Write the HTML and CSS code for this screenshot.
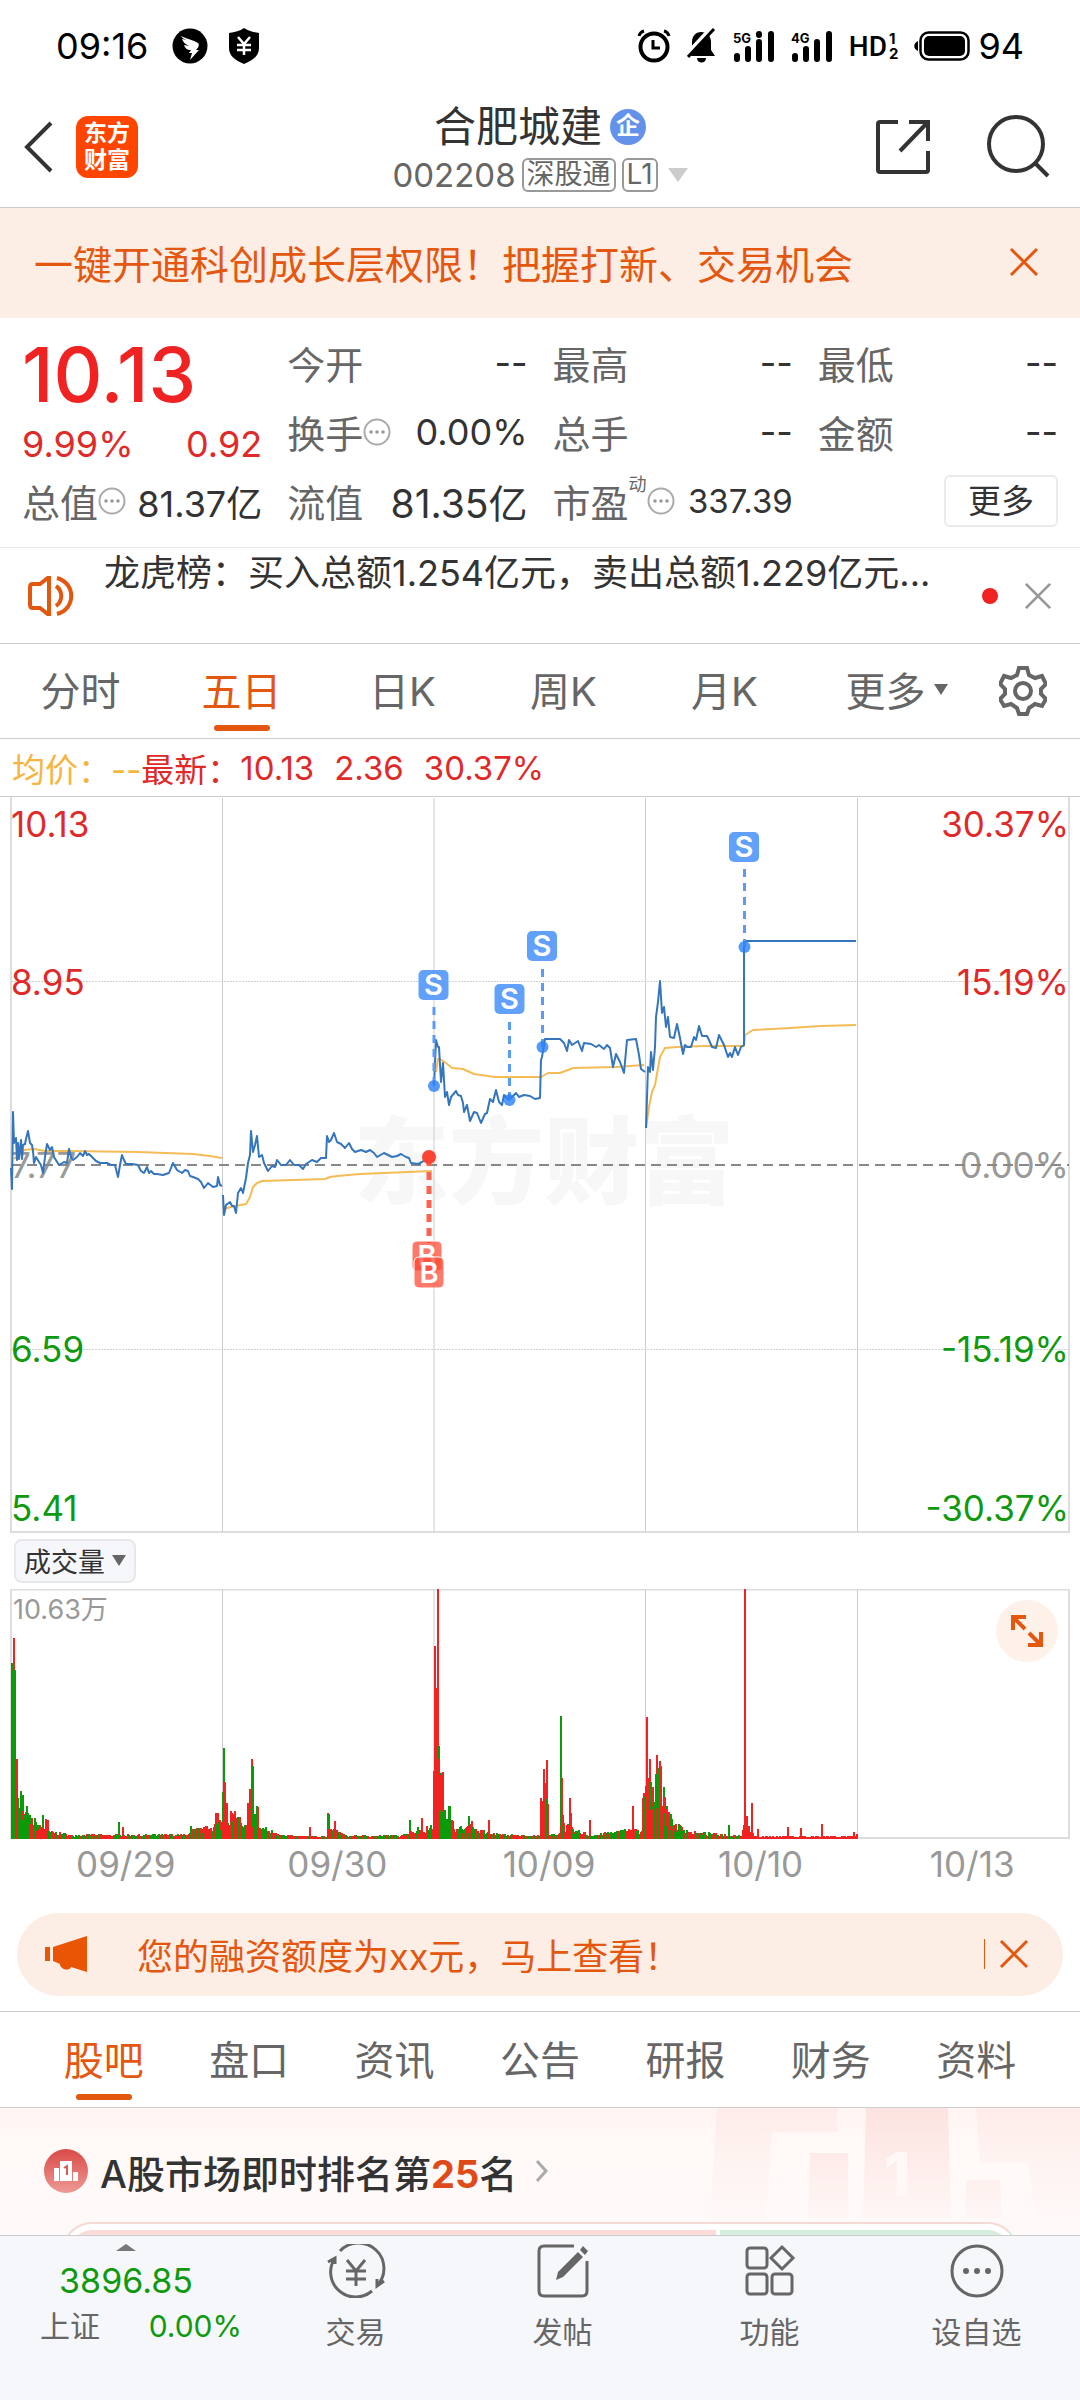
FILE: index.html
```
<!doctype html>
<html lang="zh-CN">
<head>
    <meta charset="utf-8">
    <meta name="viewport" content="width=device-width, initial-scale=1">
    <title>合肥城建 002208</title>
    <link rel="stylesheet" href="styles.css">
</head>
<body>
    <svg class="defs" aria-hidden="true">
        <symbol id="close" viewBox="0 0 30 30"><path d="M2 2L28 28M28 2L2 28"/></symbol>
        <symbol id="info" viewBox="0 0 28 28">
            <circle cx="14" cy="14" r="12.5" fill="none" stroke="#aaa" stroke-width="2"/>
            <g fill="#999"><circle cx="8" cy="14" r="1.8"/><circle cx="14" cy="14" r="1.8"/><circle cx="20" cy="14" r="1.8"/></g>
        </symbol>
    </svg>

    <div class="statusbar">
        <span class="clock">09:16</span>
        <svg width="36" height="36" viewBox="0 0 36 36"><circle cx="18" cy="18" r="17.5"/><path fill="#fff" d="M9 8c6 3 12 4 17 7 2 2 0 5-2 7h3l-9 10 2-7h-3l2-3c-4 0-6-2-7-5l5 1c-4-2-6-4-7-7l5 1c-3-1-5-2-6-4z"/></svg>
        <svg width="32" height="36" viewBox="0 0 32 36"><path d="M16 0c4 3 9 4 15 5v15c0 8-6 12-15 16C7 32 1 28 1 20V5c6-1 11-2 15-5z"/><path d="M10 9l6 7 6-7M9 17h14M9 22h14M16 16v11" fill="none" stroke="#fff" stroke-width="2.5"/></svg>
        <div class="statusbar-right">
            <svg width="34" height="34" viewBox="0 0 34 34" fill="none" stroke="#000" stroke-width="4"><circle cx="17" cy="18" r="13.5"/><path d="M16 11v8h7" stroke-width="3"/><path d="M2 7q1-4 5-5M32 7q-1-4-5-5" stroke-width="3"/></svg>
            <svg width="30" height="36" viewBox="0 0 30 36"><path d="M14 4c6 0 10 4 10 10v8l4 6H1l4-6v-8c0-6 4-10 9-10zM10 30h9c0 6-9 6-9 0z"/><path d="M-1 27L24 0" stroke="#fff" stroke-width="4"/><path d="M1 29L27 1" stroke="#000" stroke-width="3"/></svg>
            <svg class="signal" width="42" height="36" viewBox="0 -5 42 36"><text x="0" y="10">5G</text><path d="M4 23v3M15 16v10M26 9v17M26 1v1M38 1v25"/></svg>
            <svg class="signal" width="42" height="36" viewBox="0 -5 42 36"><text x="0" y="10">4G</text><path d="M4 23v3M15 16v10M26 9v17M38 1v25"/></svg>
            <span class="hd">HD</span>
            <span class="hd-sims"><i>1</i><i>2</i></span>
            <svg width="56" height="30" viewBox="0 0 56 30"><rect x="6.5" y="1.5" width="48" height="27" rx="8" fill="none" stroke="#000" stroke-width="2.5"/><rect x="10" y="5" width="41" height="20" rx="5"/><path d="M4 10v10c-5-2-5-8 0-10z"/></svg>
            <span class="battery">94</span>
        </div>
    </div>

    <header class="header">
        <button aria-label="返回"><svg width="30" height="52" viewBox="0 0 30 52"><path d="M27 2L3 26l24 24"/></svg></button>
        <div class="logo"><span>东方</span><span>财富</span></div>
        <div class="title">
            <h1>合肥城建<span class="corp">企</span></h1>
            <button class="code">002208<span class="tag">深股通</span><span class="tag">L1</span><svg width="20" height="14" viewBox="0 0 20 14"><path d="M0 0h20L10 14z"/></svg></button>
        </div>
        <button aria-label="分享"><svg width="54" height="54" viewBox="0 0 54 54"><path d="M22 2H4Q2 2 2 4v46q0 2 2 2h46q2 0 2-2V31M33 2h19v19M52 2L24 31"/></svg></button>
        <button class="search" aria-label="搜索"><svg width="64" height="64" viewBox="0 0 64 64"><circle cx="30" cy="29" r="27"/><path d="M49 48l13 13"/></svg></button>
    </header>

    <div class="banner">
        <a href="#open">一键开通科创成长层权限！把握打新、交易机会</a>
        <button aria-label="关闭"><svg class="x orange" width="30" height="30"><use href="#close"/></svg></button>
    </div>

    <section class="quote">
        <div class="price-box">
            <div class="price">10.13</div>
            <div class="change"><span>9.99%</span><span>0.92</span></div>
        </div>
        <div class="stat"><span>今开</span><b>--</b></div>
        <div class="stat"><span>最高</span><b>--</b></div>
        <div class="stat"><span>最低</span><b>--</b></div>
        <div class="stat"><span>换手<svg class="info"><use href="#info"/></svg></span><b>0.00%</b></div>
        <div class="stat"><span>总手</span><b>--</b></div>
        <div class="stat"><span>金额</span><b>--</b></div>
        <div class="stat"><span>总值<svg class="info"><use href="#info"/></svg></span><b>81.37亿</b></div>
        <div class="stat"><span>流值</span><b class="large">81.35亿</b></div>
        <div class="stat"><span>市盈<sup>动</sup><svg class="info"><use href="#info"/></svg></span><b class="small">337.39</b></div>
        <div class="stat end"><button class="more">更多</button></div>
    </section>

    <div class="news">
        <svg class="speaker" width="46" height="40" viewBox="0 0 46 40"><path d="M2 11c0-2 1-3 3-3h7l9-7v38l-9-7H5c-2 0-3-1-3-3zM28 10c7 5 7 15 0 20M29 2c19 5 19 31 0 36"/></svg>
        <a href="#news">龙虎榜：买入总额1.254亿元，卖出总额1.229亿元...</a>
        <span class="dot"></span>
        <button aria-label="关闭"><svg class="x gray" width="28" height="28"><use href="#close"/></svg></button>
    </div>

    <nav class="tabs chart-tabs">
        <a href="#min">分时</a>
        <a href="#5d" class="active">五日</a>
        <a href="#day">日K</a>
        <a href="#week">周K</a>
        <a href="#month">月K</a>
        <a href="#more">更多<svg width="14" height="11" viewBox="0 0 14 11"><path d="M0 0h14L7 11z"/></svg></a>
        <button aria-label="设置"><svg width="48" height="50" viewBox="0 0 48 50"><path d="M20 2h8l2 7 6 3 7-2 4 8-5 5v5l5 5-4 7-7-2-6 4-2 6h-8l-2-6-6-4-7 2-4-7 5-5v-5l-5-5 4-8 7 2 6-3z"/><circle cx="24" cy="25" r="8"/></svg></button>
    </nav>

    <div class="legend">
        <span class="avg">均价：--</span>
        <span class="last">最新：</span><span>10.13</span><span>2.36</span><span>30.37%</span>
    </div>

    <svg class="chart" viewBox="0 0 1080 736">
        <text class="watermark" x="544" y="400">东方财富</text>
        <path class="frame" d="M11 0V735H1069V0"/>
        <path class="grid" d="M222.500 1V735M434 1V735M645.500 1V735M857.500 1V735"/>
        <path class="dotted" d="M11 184.500H1069M11 552.500H1069"/>
        <g class="axis">
            <g class="up"><text x="11" y="40">10.13</text><text x="11" y="198">8.95</text></g>
            <g class="flat"><text x="11" y="381">7.77</text></g>
            <g class="down"><text x="11" y="565">6.59</text><text x="11" y="724">5.41</text></g>
            <g class="right">
                <g class="up"><text x="1069" y="40">30.37%</text><text x="1069" y="198">15.19%</text></g>
                <g class="flat"><text x="1069" y="381">0.00%</text></g>
                <g class="down"><text x="1069" y="565">-15.19%</text><text x="1069" y="724">-30.37%</text></g>
            </g>
        </g>
        <path class="zero" d="M11 368H1069"/>
        <g class="avg-line">
            <path d="M14 362L24 353 34 352 45 354 69 354 138 355 193 357 210 359 222 361"/>
            <path d="M224 412L235 409 246 407 250 400 253 390 257 386 262 384 325 382 330 380 337 379 360 377 432 374"/>
            <path d="M436 275L438 262 440 262 446 266 452 271 463 272 474 277 495 280 541 280 548 276 560 276 573 271 616 270 644 268"/>
            <path d="M646 331L649 310 652 295 655 288 660 260 665 251 677 250 703 249 744 249 745 238 753 233 790 231 820 229 856 228"/>
        </g>
        <g class="price-line">
            <path d="M11 371L12 392 13 315 14 346 16 341 17 363 18 346 19 362 21 343 22 362 23 348 25 347 26 342 28 334 30 346 32 348 33 354 34 366 36 360 39 365 41 368 43 376 45 360 47 347 50 353 52 350 54 360 59 368 64 365 67 366 69 352 71 360 73 363 77 360 80 356 83 359 85 354 87 358 89 357 93 361 96 364 100 366 107 366 111 368 115 368 118 380 120 368 122 358 124 363 126 367 132 367 138 368 141 374 144 376 147 370 149 376 151 374 154 377 157 377 163 378 169 376 173 366 177 373 182 376 185 373 188 374 190 379 193 380 198 382 201 385 204 391 208 386 213 390 217 389 218 380 220 388 222 389"/>
            <path d="M223 398L224 418 226 408 230 405 232 409 234 409 236 416 238 396 241 391 243 396 246 381 248 366 250 358 251 334 253 355 255 348 257 339 259 360 262 358 264 366 268 374 272 369 275 370 277 363 281 368 286 368 290 363 294 368 299 368 303 372 306 367 312 363 317 365 321 361 326 361 327 339 329 345 331 343 334 336 337 345 341 347 345 351 349 346 352 352 355 355 361 353 366 355 370 353 374 356 377 360 384 356 392 360 397 359 401 357 406 360 409 361 411 366 418 367 422 365 425 363 429 361"/>
            <path d="M434 289L436 243 438 250 439 250 441 285 443 266 445 300 447 295 449 308 451 300 456 294 458 298 461 299 463 306 464 315 467 308 470 324 474 315 477 316 481 326 485 317 487 316 490 302 493 305 496 293 499 305 502 308 504 298 509 303 516 296 519 300 524 298 530 299 535 302 540 301 541 263 542 260 545 242 560 242 564 246 567 254 569 243 572 248 578 244 582 254 584 246 591 247 596 250 599 248 604 252 607 248 610 251 613 270 616 257 620 265 624 276 627 243 636 242 639 258 641 272 645 275"/>
            <path d="M646 331L648 270 650 275 651 255 653 273 655 250 656 220 658 205 660 184 662 216 664 210 666 230 668 220 670 240 674 241 677 227 680 241 683 257 685 248 687 250 691 250 694 240 696 243 699 229 702 239 707 239 709 243 712 250 716 251 719 238 724 248 728 260 730 256 732 260 735 250 738 258 741 250 744 248 744 144 856 144"/>
        </g>
        <g class="sell">
            <path d="M434 210V289M509.500 225V303M542.500 172V250M744.500 72V150"/>
            <circle cx="434" cy="289" r="6"/><circle cx="509.500" cy="303" r="6"/><circle cx="542.500" cy="250" r="6"/><circle cx="744.500" cy="150" r="6"/>
            <rect x="418.500" y="173" width="30" height="30" rx="5"/><text x="433.500" y="198">S</text>
            <rect x="494.500" y="187" width="30" height="30" rx="5"/><text x="509.500" y="212">S</text>
            <rect x="527" y="134" width="30" height="30" rx="5"/><text x="542" y="159">S</text>
            <rect x="729" y="35" width="30" height="30" rx="5"/><text x="744" y="60">S</text>
        </g>
        <g class="buy">
            <path d="M429 361V446"/>
            <circle cx="429" cy="360" r="7"/>
            <rect x="412" y="444" width="30" height="30" rx="5"/><text x="427" y="469">B</text>
            <rect x="414" y="460" width="30" height="31" rx="5"/><text x="429" y="486">B</text>
        </g>
    </svg>

    <div class="volume-head"><button>成交量<svg width="14" height="11" viewBox="0 0 14 11"><path d="M0 0h14L7 11z"/></svg></button></div>

    <div class="volume">
        <svg class="chart" viewBox="0 0 1080 250">
            <path class="frame" d="M11 0V249H1069V0"/>
            <path class="frame" d="M11 .5H1069"/>
            <path class="grid" d="M222.500 1V249M434 1V249M645.500 1V249M857.500 1V249"/>
            <text class="max" x="13" y="30">10.63万</text>
            <g id="bars"></g>
        </svg>
        <button class="expand" aria-label="全屏"><svg width="32" height="32" viewBox="0 0 32 32"><path d="M2 15V2h13M2 2l12 12M30 17v13H17M30 30L18 18"/></svg></button>
    </div>
    <div class="dates"><span>09/29</span><span>09/30</span><span>10/09</span><span>10/10</span><span>10/13</span></div>

    <div class="notice">
        <svg width="42" height="36" viewBox="0 0 42 36"><path d="M0 11h5v14H0zM8 11L42 0v36l-16-5c-2 5-11 2-11-3l-7-3z"/></svg>
        <a href="#margin">您的融资额度为xx元，马上查看！</a>
        <button aria-label="关闭"><svg class="x orange" width="30" height="30"><use href="#close"/></svg></button>
    </div>

    <nav class="tabs page-tabs">
        <a href="#guba" class="active">股吧</a>
        <a href="#pankou">盘口</a>
        <a href="#zixun">资讯</a>
        <a href="#gonggao">公告</a>
        <a href="#yanbao">研报</a>
        <a href="#caiwu">财务</a>
        <a href="#ziliao">资料</a>
    </nav>

    <section class="rank">
        <svg class="podium" width="370" height="110" viewBox="0 0 370 110">
            <defs><linearGradient id="fade" x1="0" y1="0" x2="0" y2="1"><stop offset="0" stop-color="#fbdedb"/><stop offset="1" stop-color="#fbdedb" stop-opacity=".15"/></linearGradient></defs>
            <g fill="url(#fade)">
                <path opacity=".4" d="M7 0h120v24H62L56 110H0zM266 0h104v110h-44l-8-55h-48z"/>
                <path opacity=".8" d="M156 0h82l3 110h-88zM100 45h38v65H98zM256 72h34l2 38h-36z"/>
            </g>
            <text x="174" y="88">1</text>
        </svg>
        <a class="rank-title" href="#rank">
            <svg width="44" height="44" viewBox="0 0 44 44">
                <defs><linearGradient id="medal" x1="0" y1="0" x2="0" y2="1"><stop offset="0" stop-color="#d94a48"/><stop offset="1" stop-color="#ee9a94"/></linearGradient></defs>
                <circle cx="22" cy="22" r="22" fill="url(#medal)"/><path fill="#fff" d="M10 19h5v13h-5zM16 12h12v20H16zM29 23h5v9h-5z"/><path d="M20 19l3-2v9" fill="none" stroke="#dc5a56" stroke-width="2"/>
            </svg>
            <span>A股市场即时排名第<em>25</em>名</span>
            <svg class="arrow" width="14" height="22" viewBox="0 0 14 22"><path d="M2 1l9 10-9 10"/></svg>
        </a>
        <div class="vote"><div class="vote-up"></div><div class="vote-down"></div></div>
    </section>

    <footer class="bottom">
        <button class="index">
            <svg width="20" height="7" viewBox="0 0 20 7"><path d="M10 0l10 7H0z"/></svg>
            <strong>3896.85</strong>
            <span class="index-row"><span>上证</span><em>0.00%</em></span>
        </button>
        <button class="item"><svg width="60" height="54" viewBox="0 0 60 54"><path d="M14 7a25 25 0 0 1 37 35M46 47A25 25 0 0 1 9 14M2 18l7-4v6M58 37l-7 5v-7M21 16l9 11 9-11M30 27v15M20 27h20M20 35h20"/></svg>交易</button>
        <button class="item"><svg width="54" height="54" viewBox="0 0 54 54"><path d="M38 2H8Q3 2 3 7v40q0 5 5 5h38q5 0 5-5V17"/><path class="solid" d="M20 36l2-8L42 8l5 5-20 20zM44 6l3-4 5 5-3 4z"/></svg>发帖</button>
        <button class="item"><svg width="54" height="54" viewBox="0 0 54 54"><rect x="4" y="4" width="20" height="20" rx="3"/><rect x="4" y="30" width="20" height="20" rx="3"/><rect x="29" y="30" width="20" height="20" rx="3"/><path d="M39 3l11 11-11 11-11-11z"/></svg>功能</button>
        <button class="item"><svg width="54" height="54" viewBox="0 0 54 54"><circle cx="27" cy="27" r="25"/><g class="solid"><circle cx="16" cy="27" r="3"/><circle cx="27" cy="27" r="3"/><circle cx="38" cy="27" r="3"/></g></svg>设自选</button>
    </footer>

    <script src="volume.js"></script>
</body>
</html>
```
FILE: styles.css
```
* { box-sizing: border-box; }
body {
    margin: 0;
    background: #fff;
    color: #333;
    font-family: Inter, "Noto Sans CJK SC", sans-serif;
    font-size: 36px;
}
button {
    padding: 0;
    border: 0;
    background: none;
    color: inherit;
    font: inherit;
    cursor: pointer;
}
a { color: inherit; text-decoration: none; }
svg { display: block; flex: none; }
.defs { position: absolute; width: 0; height: 0; }
.x { fill: none; stroke-width: 3; }
.x.orange { stroke: #e4570f; }
.x.gray { stroke: #999; }

/* system status bar */
.statusbar {
    display: flex;
    align-items: center;
    gap: 20px;
    height: 92px;
    padding: 0 56px;
    color: #000;
}
.clock { margin-right: 4px; }
.statusbar-right {
    display: flex;
    align-items: center;
    gap: 16px;
    margin-left: auto;
}
.signal text { font-size: 13px; font-weight: 700; }
.signal path { stroke: #000; stroke-width: 6; stroke-linecap: round; }
.hd { font-family: Roboto, sans-serif; font-size: 28px; font-weight: 500; }
.hd-sims {
    display: flex;
    flex-direction: column;
    margin-left: -14px;
    font-size: 15px;
    font-weight: 700;
    line-height: 15px;
}
.hd-sims i { font-style: normal; }
.battery { margin-left: -8px; }

.header {
    display: flex;
    align-items: center;
    height: 116px;
    padding: 0 30px 6px 24px;
    border-bottom: 1px solid #ccc;
}
.header svg { fill: none; stroke: #333; stroke-width: 4; }
.logo {
    display: flex;
    flex-direction: column;
    justify-content: center;
    width: 62px;
    height: 62px;
    margin-left: 22px;
    border-radius: 12px;
    background: #ff4500;
    color: #fff;
    font-size: 23px;
    font-weight: 700;
    line-height: 27px;
    text-align: center;
}
.title { flex: 1; padding-left: 66px; text-align: center; }
.title h1 {
    display: flex;
    align-items: center;
    justify-content: center;
    gap: 8px;
    margin: 0;
    font-size: 42px;
    font-weight: 400;
    line-height: 56px;
}
.corp {
    width: 36px;
    height: 36px;
    border-radius: 50%;
    background: #6491ea;
    color: #fff;
    font-size: 24px;
    font-weight: 700;
    line-height: 34px;
}
.code {
    display: flex;
    align-items: center;
    gap: 6px;
    margin: 0 auto;
    color: #666;
    font-size: 33px;
    line-height: 40px;
}
.header .code svg { margin-left: 4px; fill: #ccc; stroke: none; }
.tag {
    height: 34px;
    padding: 0 3px;
    border: 2px solid #999;
    border-radius: 6px;
    font-size: 28px;
    line-height: 28px;
}
.search { margin-left: 56px; }

.banner {
    display: flex;
    align-items: center;
    justify-content: space-between;
    height: 110px;
    padding: 0 41px 2px 34px;
    background: #fcede5;
    color: #e4570f;
    font-size: 39px;
}

/* quote figures */
.quote {
    display: grid;
    grid-template-columns: repeat(4, 1fr);
    grid-auto-rows: 69px;
    column-gap: 25px;
    padding: 10px 22px 12px;
    border-bottom: 1px solid #e8e8e8;
}
.price-box { grid-row: span 2; color: #e02a2a; }
.price {
    color: #f02222;
    font-size: 76px;
    font-weight: 500;
    line-height: 92px;
}
.change {
    display: flex;
    justify-content: space-between;
    line-height: 48px;
}
.stat {
    display: flex;
    align-items: center;
    justify-content: space-between;
    color: #666;
    font-size: 38px;
    white-space: nowrap;
}
.stat span { display: flex; align-items: center; }
.stat b { color: #333; font-size: 36px; font-weight: 400; }
.stat .small { font-size: 33px; }
.stat .large { font-size: 39px; }
.stat sup { align-self: flex-start; font-size: 18px; line-height: 24px; }
.stat.end { justify-content: flex-end; }
.info { width: 28px; height: 28px; }
.more {
    width: 114px;
    height: 52px;
    border: 2px solid #eaeaea;
    border-radius: 6px;
    color: #333;
    font-size: 33px;
    line-height: 44px;
}

.news {
    display: flex;
    align-items: center;
    height: 96px;
    padding: 0 28px;
    border-bottom: 1px solid #ccc;
}
.news a {
    align-self: flex-start;
    flex: 1;
    margin-left: 30px;
    line-height: 50px;
    white-space: nowrap;
}
.speaker { fill: none; stroke: #e4570f; stroke-width: 4; }
.dot {
    width: 16px;
    height: 16px;
    margin-right: 26px;
    border-radius: 50%;
    background: #f02222;
}

.tabs {
    display: flex;
    align-items: stretch;
    height: 95px;
    border-bottom: 1px solid #ccc;
    color: #666;
    font-size: 40px;
}
.tabs a {
    position: relative;
    display: flex;
    flex: 1;
    align-items: center;
    justify-content: center;
    padding-bottom: 4px;
}
.tabs a svg { margin: 0 -22px 0 8px; fill: #666; }
.tabs .active { color: #e4570f; }
.tabs .active::after {
    content: "";
    position: absolute;
    bottom: 7px;
    width: 56px;
    height: 6px;
    border-radius: 3px;
    background: #e4570f;
}
.chart-tabs button { width: 114px; }
.chart-tabs button svg { margin: auto; fill: none; stroke: #666; stroke-width: 4; }

.legend {
    display: flex;
    align-items: center;
    gap: 20px;
    height: 58px;
    padding: 0 12px;
    border-bottom: 1px solid #ccc;
    color: #e02a2a;
    font-size: 33px;
}
.legend .avg { margin-right: -20px; color: #f5b53f; }
.legend .last { margin-right: -20px; }

/* charts */
.chart { width: 100%; height: auto; }
.frame { fill: none; stroke: #ddd; stroke-width: 2; }
.grid { stroke: #ccc; }
.dotted { stroke: #d0d0d0; stroke-dasharray: 2 1; }
.zero { stroke: #888; stroke-width: 2; stroke-dasharray: 10 6; }
.watermark { fill: #f7f7f7; font-size: 95px; font-weight: 900; text-anchor: middle; }
.axis { font-size: 35px; }
.right { text-anchor: end; }
.up { fill: #e02a2a; }
.flat { fill: #999; }
.down { fill: #0f990f; }
.avg-line, .price-line { fill: none; stroke-width: 2; stroke-linejoin: round; }
.avg-line { stroke: #f5bc55; }
.price-line { stroke: #3575bb; }
.sell path, .buy path { stroke-width: 3; stroke-dasharray: 8 6; }
.sell path { stroke: #5b9bf5; }
.sell rect { fill: #62a1fb; }
.sell circle { fill: #2b80f8; fill-opacity: .8; }
.buy path { stroke: #fb6350; stroke-width: 5; }
.buy rect { fill: #ff4531; fill-opacity: .72; stroke: #fff; }
.buy circle { fill: #fb4434; }
.sell text, .buy text { fill: #fff; font-size: 29px; font-weight: 600; text-anchor: middle; }

.volume-head { padding: 6px 14px; }
.volume-head button {
    display: flex;
    align-items: center;
    gap: 7px;
    height: 44px;
    padding: 0 8px 2px;
    border: 2px solid #e8e8ea;
    border-radius: 8px;
    background: #f6f7fa;
    font-size: 27px;
}
.volume-head svg { fill: #666; }
.volume { position: relative; }
.max { fill: #999; font-size: 27px; }
.bar-r { fill: #f02222; }
.bar-g { fill: #0a9a0a; }
.expand {
    position: absolute;
    top: 11px;
    right: 22px;
    width: 62px;
    height: 62px;
    border-radius: 50%;
    background: #fef1ea;
}
.expand svg { margin: auto; fill: none; stroke: #e4570f; stroke-width: 4; }
.dates {
    display: flex;
    padding: 0 11px;
    color: #999;
    font-size: 35px;
    line-height: 50px;
}
.dates span { flex: 1; padding-left: 18px; text-align: center; }

.notice {
    display: flex;
    align-items: center;
    height: 83px;
    margin: 24px 17px 15px;
    padding: 0 34px 2px 28px;
    border-radius: 42px;
    background: #fcede5;
    color: #e4570f;
}
.notice > svg { fill: #e95504; }
.notice a { flex: 1; margin-left: 50px; }
.notice button { padding-left: 14px; border-left: 1px solid #e4570f; }

.page-tabs { height: 97px; padding: 0 31px; border-top: 1px solid #ccc; }

.rank {
    position: relative;
    height: 127px;
    overflow: hidden;
    background: linear-gradient(#fff5f3, #fffaf8 40%, #fffafa);
}
.podium { position: absolute; top: 0; right: 0; }
.podium text { fill: #fff8f6; font-size: 60px; font-weight: 800; }
.rank-title {
    position: relative;
    display: flex;
    align-items: center;
    height: 114px;
    padding: 12px 44px 0;
    font-size: 38px;
    font-weight: 500;
}
.rank-title span { margin: 0 18px 0 12px; }
.rank-title em { color: #de4a1a; font-style: normal; font-weight: 700; }
.arrow { fill: none; stroke: #aaa; stroke-width: 3; }
.vote {
    position: relative;
    display: flex;
    gap: 4px;
    height: 60px;
    margin: 0 62px;
    padding: 6px;
    border: 2px solid #f5d9d4;
    border-right-color: #d3ecdc;
    border-radius: 30px;
    background: #fff;
}
.vote-up { flex: 69; border-radius: 24px 0 0 24px; background: #fbdcd9; }
.vote-down { flex: 31; border-radius: 0 24px 24px 0; background: #d5eedd; }

.bottom {
    display: flex;
    height: 165px;
    border-top: 1px solid #ccc;
    background: #f6f7fa;
    color: #666;
}
.index {
    display: flex;
    flex: 252;
    flex-direction: column;
    padding-top: 8px;
}
.index svg { margin: 0 auto; fill: #777; }
.index strong {
    width: 100%;
    color: #0f990f;
    font-size: 34px;
    font-weight: 400;
    line-height: 60px;
}
.index-row {
    display: flex;
    justify-content: space-between;
    width: 100%;
    padding: 0 10px 0 40px;
    font-size: 30px;
    line-height: 30px;
}
.index em { color: #0f990f; font-style: normal; }
.item {
    display: flex;
    flex: 207;
    flex-direction: column;
    align-items: center;
    padding-top: 8px;
    font-size: 30px;
    line-height: 68px;
}
.item svg { fill: none; stroke: #666; stroke-width: 3; }
.item .solid { fill: #666; stroke: none; }
```
FILE: volume.js
```
// single tall bars: x, height, colour
const peaks = [
    [11, 175, 'g'], [12, 175, 'g'], [13, 200, 'r'], [14, 168, 'g'], [16, 79, 'r'], [17, 40, 'g'], [20, 47, 'g'], [22, 43, 'g'], [26, 32, 'g'],
    [42, 23, 'g'], [45, 19, 'r'], [47, 18, 'r'], [118, 16, 'g'], [122, 11, 'r'], [190, 12, 'g'],
    [215, 25, 'r'], [217, 25, 'r'], [222, 46, 'g'], [223, 90, 'g'], [224, 56, 'r'], [226, 35, 'r'],
    [247, 35, 'r'], [249, 49, 'r'], [251, 79, 'r'], [252, 72, 'g'], [254, 24, 'g'], [256, 32, 'g'], [257, 31, 'r'],
    [309, 11, 'r'], [327, 25, 'r'], [328, 24, 'g'], [334, 17, 'r'],
    [409, 18, 'g'], [417, 11, 'g'], [421, 20, 'r'],
    [433, 67, 'r'], [434, 192, 'r'], [436, 150, 'r'], [437, 249, 'r'], [438, 92, 'g'], [440, 65, 'g'], [442, 66, 'r'],
    [468, 22, 'g'], [471, 17, 'r'], [488, 18, 'r'],
    [540, 40, 'r'], [541, 21, 'g'], [543, 69, 'r'], [545, 55, 'r'], [546, 78, 'r'],
    [560, 122, 'g'], [561, 60, 'r'], [562, 23, 'r'], [569, 40, 'r'], [570, 25, 'r'], [589, 18, 'r'], [632, 32, 'r'],
    [642, 20, 'g'], [645, 52, 'g'], [646, 121, 'r'], [648, 60, 'r'], [649, 79, 'r'], [650, 56, 'g'], [652, 51, 'r'],
    [656, 83, 'r'], [657, 70, 'g'], [659, 77, 'r'], [660, 72, 'r'], [663, 51, 'g'], [664, 41, 'r'], [666, 32, 'g'], [670, 24, 'g'],
    [728, 13, 'g'], [744, 249, 'r'], [746, 22, 'r'], [751, 35, 'r'], [757, 9, 'r'],
    [787, 11, 'r'], [800, 10, 'r'], [821, 14, 'r'], [853, 6, 'r'], [856, 4, 'r'],
];
// stretches of small trades: from, to, height at each end, share of red
const ranges = [
    [15, 20, 45, 34, .4], [20, 38, 32, 17, .45], [38, 48, 14, 14, .7], [48, 75, 8, 3, .5], [75, 188, 4, 4, .6], [188, 205, 9, 12, .6], [205, 222, 12, 22, .6],
    [223, 242, 34, 22, .6], [242, 247, 12, 18, .6], [247, 258, 34, 24, .6], [258, 285, 14, 3, .5], [285, 327, 3, 2, .7], [327, 345, 12, 4, .5],
    [345, 400, 3, 3, .5], [400, 433, 4, 14, .6], [433, 440, 110, 70, .9], [440, 450, 46, 36, .15], [450, 455, 22, 12, .7], [455, 475, 11, 15, .4],
    [475, 500, 10, 4, .5], [500, 540, 4, 3, .6], [540, 548, 40, 40, .8], [548, 560, 4, 6, .7], [560, 572, 18, 12, .6], [572, 587, 9, 6, .4],
    [587, 622, 3, 9, .4], [622, 642, 10, 10, .6], [642, 655, 50, 36, .5], [655, 662, 66, 60, .6], [662, 672, 44, 16, .4], [672, 690, 18, 9, .5],
    [690, 742, 7, 3, .5], [742, 753, 16, 12, 1], [753, 857, 2, 2, 1],
];

let seed = 7;
function random() {
    seed = (seed * 16807) % 2147483647;
    return seed / 2147483647;
}
function bar(x, h, colour) {
    const rect = document.createElementNS('http://www.w3.org/2000/svg', 'rect');
    rect.setAttribute('x', x);
    rect.setAttribute('y', 249 - h);
    rect.setAttribute('width', 2);
    rect.setAttribute('height', h + 1);
    rect.setAttribute('class', `bar-${colour}`);
    document.getElementById('bars').appendChild(rect);
}
for (const [x, h, colour] of peaks) {
    bar(x, h, colour);
}
for (const [from, to, start, end, red] of ranges) {
    for (let x = from; x < to; x++) {
        const top = start + (end - start) * (x - from) / (to - from);
        bar(x, Math.max(1, Math.round(top * (.35 + .65 * random()))), random() < red ? 'r' : 'g');
    }
}
```
